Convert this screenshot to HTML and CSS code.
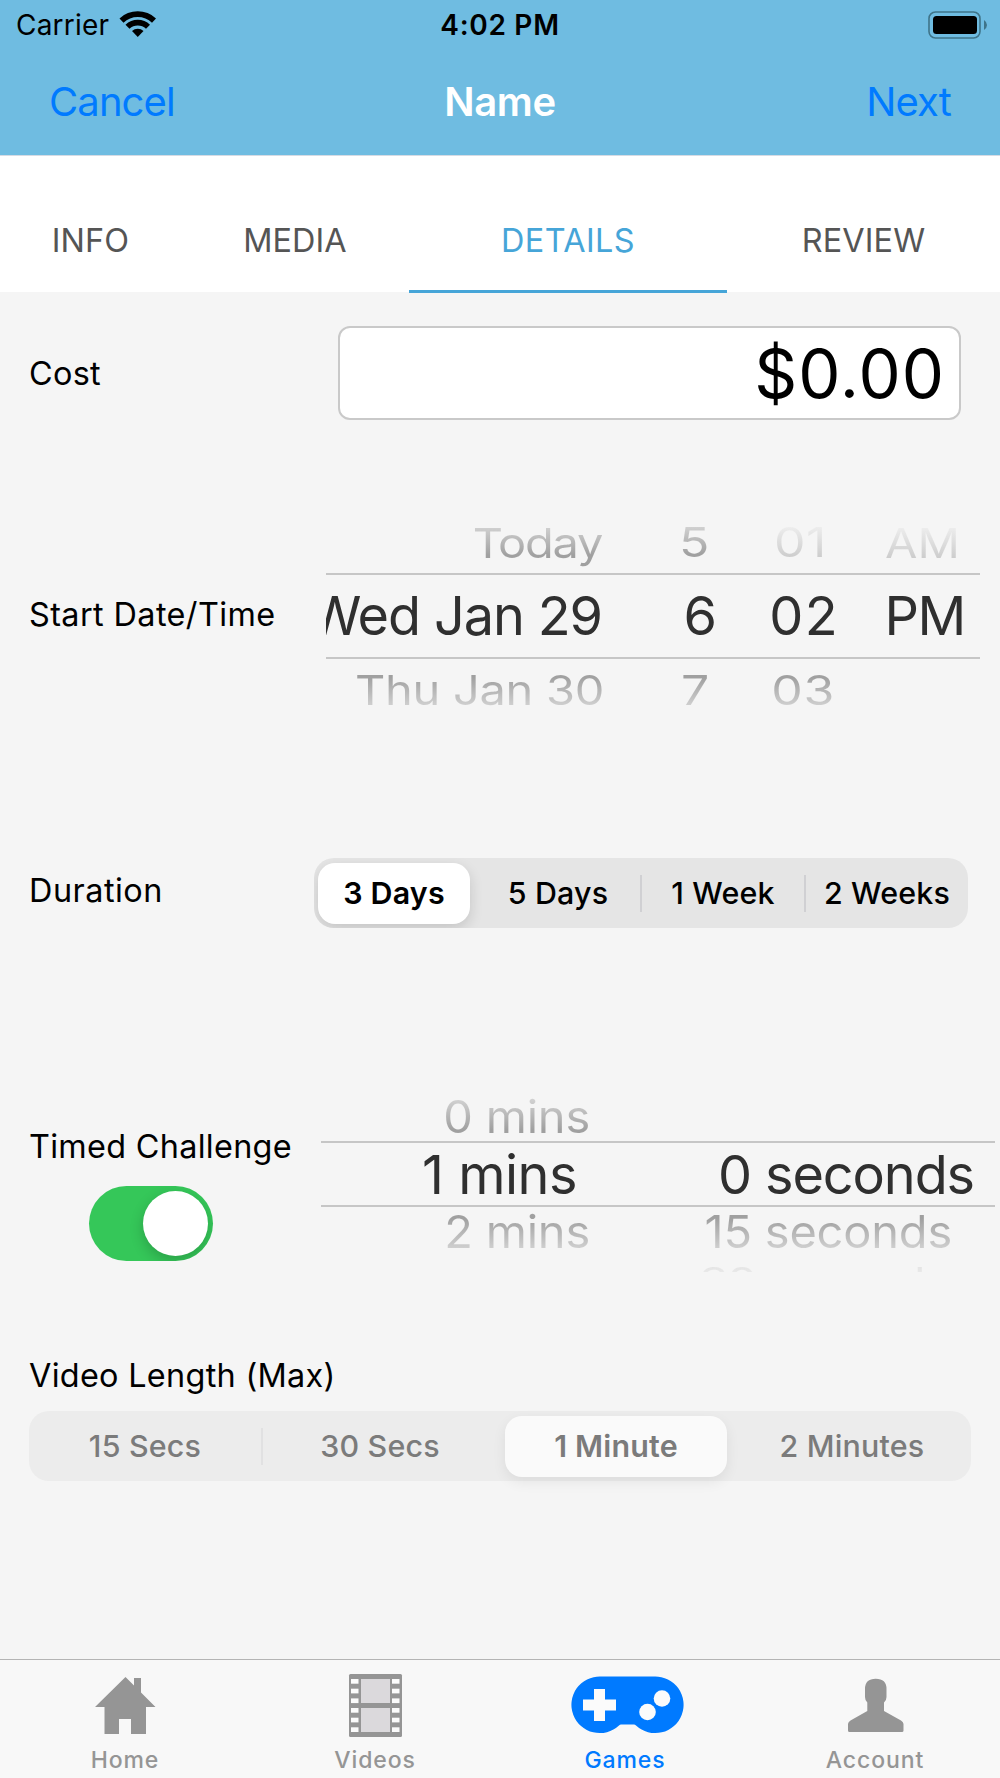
FILE: index.html
```html
<!DOCTYPE html>
<html lang="en">

<head>
    <meta charset="UTF-8">
    <meta name="viewport" content="width=device-width, initial-scale=1.0">
    <title>Name</title>
    <link rel="stylesheet" href="styles.css">
</head>

<body>
    <header class="header">
        <div class="status-bar">
            <div class="carrier">
                <span>Carrier</span>
                <svg class="wifi" viewBox="0 0 38 28">
                    <path d="M0.5 8.5 A26.5 26.5 0 0 1 37 8.5 L33 12.7 A20.5 20.5 0 0 0 4.5 12.7 Z" />
                    <path d="M6.5 14.7 A17.5 17.5 0 0 1 31 14.7 L27 18.7 A12 12 0 0 0 10.5 18.7 Z" />
                    <path d="M13 21 A8.5 8.5 0 0 1 24.5 21 L18.750 27 Z" />
                </svg>
            </div>
            <span class="clock">4:02 PM</span>
            <svg class="battery" viewBox="0 0 60 28">
                <rect class="battery-case" x="1" y="1" width="51" height="26" rx="6.5" />
                <rect x="5" y="5" width="44" height="18" rx="3.5" />
                <path class="battery-tip" d="M56 9 Q59 11 59 14 Q59 17 56 19 Z" />
            </svg>
        </div>
        <div class="nav">
            <a class="nav-link cancel">Cancel</a>
            <h1>Name</h1>
            <a class="nav-link next">Next</a>
        </div>
    </header>

    <div class="tabs">
        <div class="tab"><span>INFO</span></div>
        <div class="tab"><span>MEDIA</span></div>
        <div class="tab active"><span>DETAILS</span></div>
        <div class="tab"><span>REVIEW</span></div>
    </div>

    <main class="form">
        <div class="row row-cost">
            <label>Cost</label>
            <div class="cost-input">$0.00</div>
        </div>

        <div class="row row-start">
            <label class="l-start">Start Date/Time</label>
            <div class="picker date-picker">
                <div class="picker-row above">
                    <span class="today">Today</span><span class="digits hour">5</span><span class="digits prev-minute faint">01</span><span class="faint am">AM</span>
                </div>
                <div class="picker-row selected">
                    <span class="day">Wed Jan 29</span><span>6</span><span class="minute">02</span><span class="pm">PM</span>
                </div>
                <div class="picker-row below">
                    <span class="thu">Thu Jan 30</span><span class="digits hour">7</span><span class="digits next-minute">03</span>
                </div>
            </div>
        </div>

        <div class="row row-duration">
            <label class="l-duration">Duration</label>
            <div class="segments duration">
                <span class="on">3 Days</span><span>5 Days</span><span class="line">1 Week</span><span class="line">2 Weeks</span>
            </div>
        </div>

        <div class="row row-timed">
            <div class="timed">
                <label>Timed Challenge</label>
                <div class="switch"><div class="knob"></div></div>
            </div>
            <div class="picker time-picker">
                <div class="picker-row above">
                    <span class="mins">0 mins</span>
                </div>
                <div class="picker-row selected">
                    <span>1 mins</span><span class="secs">0 seconds</span>
                </div>
                <div class="picker-row below">
                    <span class="mins">2 mins</span><span class="secs">15 seconds</span>
                </div>
                <div class="picker-row last">
                    <span></span><span class="secs">30 seconds</span>
                </div>
            </div>
        </div>

        <div class="video-length">
            <label>Video Length (Max)</label>
            <div class="segments disabled">
                <span>15 Secs</span><span class="line">30 Secs</span><span class="on">1 Minute</span><span>2 Minutes</span>
            </div>
        </div>
    </main>

    <footer class="tab-bar">
        <div class="item">
            <svg viewBox="0 0 120 66">
                <path d="M60.5 6 L69 14.5 V7 H76 V21.5 L90.5 36 H81 V63 H66 V48 H54 V63 H39.5 V36 H30 Z" />
            </svg>
            <span>Home</span>
        </div>
        <div class="item">
            <svg viewBox="0 0 120 66">
                <rect x="34" y="3" width="53" height="63" rx="1.5" />
                <g class="frame">
                    <rect x="46" y="8" width="29" height="24" />
                    <rect x="46" y="37" width="29" height="24" />
                </g>
                <g class="hole">
                    <rect x="36" y="8" width="7.5" height="4.7" />
                    <rect x="36" y="17.7" width="7.5" height="4.7" />
                    <rect x="36" y="27.4" width="7.5" height="4.7" />
                    <rect x="36" y="37" width="7.5" height="4.7" />
                    <rect x="36" y="46.7" width="7.5" height="4.7" />
                    <rect x="36" y="56.3" width="7.5" height="4.7" />
                    <rect x="77" y="8" width="7.5" height="4.7" />
                    <rect x="77" y="17.7" width="7.5" height="4.7" />
                    <rect x="77" y="27.4" width="7.5" height="4.7" />
                    <rect x="77" y="37" width="7.5" height="4.7" />
                    <rect x="77" y="46.7" width="7.5" height="4.7" />
                    <rect x="77" y="56.3" width="7.5" height="4.7" />
                </g>
            </svg>
            <span>Videos</span>
        </div>
        <div class="item active">
            <svg viewBox="0 0 120 66">
                <path d="M35.500 5.5 H89.500 A28.300 28.300 0 1 1 71 54.5 Q70 53.5 69 53.5 H56 Q55 53.5 54 54.5 A28.300 28.300 0 1 1 35.500 5.5 Z" />
                <path class="hole" d="M29 18 H40 V28.5 H51 V39.5 H40 V50 H29 V39.5 H18 V28.5 H29 Z" />
                <circle class="hole" cx="97" cy="27.5" r="8.3" />
                <circle class="hole" cx="82.5" cy="41" r="8.3" />
            </svg>
            <span>Games</span>
        </div>
        <div class="item">
            <svg viewBox="0 0 120 66">
                <path d="M50 18 Q50 7.8 60.7 7.8 Q71.5 7.8 71.5 18 V26 Q71.5 29.5 69 31.5 V40 L86 49.5 Q88.5 51 88.5 53 V59.5 Q88.5 61 87 61 H34.5 Q33 61 33 59.5 V53 Q33 51 35.5 49.5 L52.3 40 V31.5 Q50 29.5 50 26 Z" />
            </svg>
            <span>Account</span>
        </div>
    </footer>
</body>

</html>
```
FILE: styles.css
```css
* {
    box-sizing: border-box;
}

body {
    margin: 0;
    height: 1778px;
    display: flex;
    flex-direction: column;
    background: #f5f5f5;
    font-family: Inter, "Liberation Sans", sans-serif;
    color: #000;
    overflow: hidden;
}

span,
label,
a,
h1 {
    white-space: nowrap;
}

/* Header */
.header {
    height: 156px;
    background: #6fbce1;
    border-bottom: 1px solid #d5dbe4;
}

.status-bar {
    display: grid;
    grid-template-columns: 1fr auto 1fr;
    align-items: center;
    height: 50px;
    padding: 0 12px;
    font-size: 28px;
}

.carrier {
    display: flex;
    align-items: center;
    gap: 10px;
    margin-left: 4px;
    letter-spacing: 0.2px;
}

.wifi {
    width: 38px;
    height: 28px;
    margin-top: -2px;
}

.clock {
    font-weight: 600;
    letter-spacing: 0.7px;
}

.battery {
    width: 60px;
    height: 28px;
    justify-self: end;
}

.battery-case {
    fill: none;
    stroke: #3f7489;
    stroke-width: 1.6;
}

.battery-tip {
    fill: #3f7489;
}

.nav {
    display: grid;
    grid-template-columns: 1fr auto 1fr;
    align-items: center;
    height: 103px;
    padding: 0 49px;
    font-size: 40px;
}

.nav-link {
    color: #007aff;
    letter-spacing: -0.9px;
}

.next {
    text-align: right;
}

h1 {
    margin: 0;
    color: #fff;
    font-size: 40px;
    font-weight: 600;
    letter-spacing: -0.4px;
}

/* Tabs */
.tabs {
    display: grid;
    grid-template-columns: 181px 228px 318px 273px;
    height: 136px;
    background: #fff;
    color: #555;
    font-size: 32.4px;
    letter-spacing: 0.1px;
}

.tab {
    display: flex;
    justify-content: center;
    align-items: flex-end;
    padding-bottom: 29px;
    line-height: 44px;
}

.tab.active {
    color: #46a5d8;
    border-bottom: 3px solid #46a5d8;
    margin-bottom: -1px;
    padding-bottom: 27px;
    letter-spacing: 0.4px;
}

/* Form */
.form {
    flex: 1;
    padding: 34px 0 0 29px;
    font-size: 32.4px;
}

.row {
    display: flex;
    align-items: center;
    justify-content: space-between;
}

label {
    display: block;
    line-height: 40px;
    letter-spacing: 0.3px;
}

.row-cost label {
    padding-top: 1px;
}

.cost-input {
    width: 623px;
    height: 94px;
    margin-right: 39px;
    padding-right: 14px;
    border: 2px solid #c9c9c9;
    border-radius: 12px;
    background: #fff;
    font-size: 67px;
    line-height: 91px;
    letter-spacing: 1px;
    text-align: right;
}

/* Pickers */
.picker {
    overflow: hidden;
    color: #2f2f2f;
}

.picker-row {
    display: grid;
    grid-template-rows: 100%;
    align-items: center;
    text-align: right;
    font-size: 47px;
}

.picker-row.selected {
    border-top: 2px solid #c6c6c6;
    border-bottom: 2px solid #c6c6c6;
    font-size: 54px;
}

.picker-row span {
    justify-self: end;
}

.above span,
.below span,
.last span {
    color: transparent;
    background-clip: text;
    -webkit-background-clip: text;
    transform: scaleY(0.88);
}

.above span {
    background-image: linear-gradient(#d0d0d0 20%, #a0a0a0 75%);
}

.below span {
    background-image: linear-gradient(#a0a0a0 25%, #cecece 80%);
}

.above .faint {
    background-image: linear-gradient(#ededed 20%, #cdcdcd 80%);
}

.row-start {
    margin-top: 96px;
}

.l-start {
    padding-bottom: 3px;
    letter-spacing: 0.4px;
}

.date-picker {
    width: 654px;
    height: 200px;
    margin-right: 20px;
}

.date-picker .picker-row {
    grid-template-columns: 276px 115px 122px 126px;
    height: 61px;
}

.date-picker .selected {
    height: 86px;
    padding-bottom: 1px;
}

.date-picker .above {
    height: 57px;
    padding-bottom: 5px;
}

.date-picker .today {
    letter-spacing: -1.3px;
}

.date-picker .day {
    letter-spacing: -1.1px;
}

.date-picker .thu {
    margin-right: -2px;
    letter-spacing: -0.3px;
}

.date-picker .digits {
    font-size: 50px;
    letter-spacing: 0.6px;
    transform: scaleY(0.825);
}

.date-picker .hour {
    margin-right: 7px;
}

.date-picker .prev-minute {
    margin-right: 12px;
}

.date-picker .next-minute {
    margin-right: 4px;
}

.date-picker .minute {
    letter-spacing: 1.4px;
}

.date-picker .pm {
    letter-spacing: -1.4px;
}

.date-picker .am {
    margin-right: 5px;
}

/* Segmented controls */
.row-duration {
    margin-top: 142px;
}

.l-duration {
    padding-bottom: 5px;
    letter-spacing: 0.5px;
}

.segments {
    display: grid;
    grid-template-columns: 162px 164px 164px 1fr;
    align-items: center;
    height: 70px;
    border-radius: 20px;
    background: #e5e5e5;
    font-size: 30.4px;
    font-weight: 500;
    text-align: center;
    line-height: 37px;
    letter-spacing: 0.2px;
}

.segments .line {
    border-left: 2px solid #d0d0d3;
}

.segments .on {
    height: 61px;
    margin: 0 6px 0 4px;
    line-height: 60px;
    border-radius: 17px;
    background: #fff;
    font-weight: 600;
    box-shadow: 0 5px 14px rgba(0, 0, 0, 0.14);
}

.duration {
    width: 654px;
    margin-right: 32px;
    overflow: hidden;
}

/* Timed challenge */
.row-timed {
    margin-top: 152px;
    align-items: flex-start;
}

.timed {
    padding-top: 47px;
}

.switch {
    width: 124px;
    height: 75px;
    margin: 19px 0 0 60px;
    padding: 5px;
    border-radius: 38px;
    background: #35c759;
    display: flex;
    justify-content: flex-end;
    overflow: hidden;
}

.knob {
    width: 65px;
    height: 65px;
    border-radius: 50%;
    background: #fff;
    box-shadow: 0 5px 14px rgba(0, 0, 0, 0.2);
}

.time-picker {
    width: 674px;
    height: 192px;
    margin-right: 5px;
}

.time-picker .picker-row {
    grid-template-columns: 256px 397px;
    height: 49px;
    letter-spacing: -0.2px;
}

.time-picker .above {
    height: 61px;
    padding-top: 12px;
}

.time-picker .selected {
    height: 66px;
    padding-top: 1px;
    letter-spacing: -0.5px;
}

.time-picker .selected .secs {
    letter-spacing: -1.1px;
}

.time-picker .mins {
    margin-right: -13px;
    transform: scaleY(0.95);
}

.time-picker .below .secs {
    margin-right: 22px;
    transform: scaleY(0.95);
}

.time-picker .last {
    height: 44px;
}

.time-picker .last .secs {
    margin-right: 26px;
    letter-spacing: -1.2px;
    background-image: linear-gradient(#e4e4e4 20%, #f2f2f2 60%);
    transform: scaleY(0.7);
}

/* Video length */
.video-length {
    margin: 84px 29px 0 0;
}

.disabled {
    grid-template-columns: 232px 236px 236px 1fr;
    margin-top: 15px;
    background: #ececec;
    color: #7b7b7b;
}

.disabled .on {
    margin: 0 6px 0 8px;
    background: #fafafa;
    box-shadow: 0 5px 14px rgba(0, 0, 0, 0.07);
}

.disabled .line {
    border-color: #e1e1e2;
}

/* Tab bar */
.tab-bar {
    display: grid;
    grid-template-columns: repeat(4, 1fr);
    height: 119px;
    padding-top: 11px;
    border-top: 1px solid #b4b4b4;
    background: #f8f8f8;
}

.item {
    display: flex;
    flex-direction: column;
    align-items: center;
    color: #959595;
    font-size: 23px;
    font-weight: 500;
    line-height: 24px;
    letter-spacing: 0.9px;
}

.item.active {
    color: #007aff;
}

.item svg {
    width: 120px;
    height: 66px;
    margin-bottom: 11px;
    fill: currentColor;
}

.item .hole {
    fill: #fbfbfb;
}

.item .frame {
    fill: #dbd9dc;
}
```
